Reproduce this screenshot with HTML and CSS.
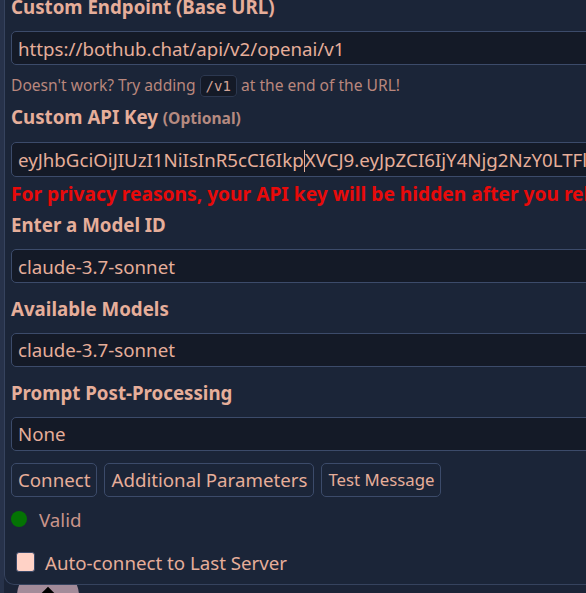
FILE: index.html
```html
<!DOCTYPE html>
<html lang="en">
<head>
  <meta charset="UTF-8">
  <meta name="viewport" content="width=device-width, initial-scale=1.0">
  <title>API Connections</title>
  <link rel="stylesheet" href="styles.css">
</head>
<body>
  <div class="panel">
    <h4 class="field-title first">Custom Endpoint (Base URL)</h4>
    <input class="text-input" type="text" value="https://bothub.chat/api/v2/openai/v1">
    <div class="hint">Doesn't work? Try adding <code>/v1</code> at the end of the URL!</div>

    <h4 class="field-title after-hint">Custom API Key <span class="optional">(Optional)</span></h4>
    <div class="text-input key-input">eyJhbGciOiJIUzI1NiIsInR5cCI6Ikp<span class="caret"></span>XVCJ9.eyJpZCI6IjY4Njg2NzY0LTFlNWYtNGI</div>
    <div class="warning">For privacy reasons, your API key will be hidden after you reload the page.</div>

    <h4 class="field-title after-warning">Enter a Model ID</h4>
    <input class="text-input" type="text" value="claude-3.7-sonnet">

    <h4 class="field-title">Available Models</h4>
    <div class="text-input">claude-3.7-sonnet</div>

    <h4 class="field-title">Prompt Post-Processing</h4>
    <div class="text-input">None</div>

    <div class="button-row">
      <div class="menu-button">Connect</div>
      <div class="menu-button">Additional Parameters</div>
      <div class="menu-button small">Test Message</div>
    </div>

    <div class="status">
      <span class="status-dot"></span>
      <span>Valid</span>
    </div>

    <label class="checkbox-row">
      <span class="checkbox"></span>
      <span>Auto-connect to Last Server</span>
    </label>
  </div>
  <div class="avatar"><span class="avatar-inner"></span></div>
</body>
</html>
```
FILE: styles.css
```css
body {
  margin: 0;
  padding: 0 0 0 4px;
  background-color: #1b2437;
  font-family: "Noto Sans", sans-serif;
  font-size: 18.7px;
  color: #e6ae9a;
  overflow: hidden;
  height: 593px;
  box-shadow: inset 4px 0 0 #27324a;
}

.panel {
  display: flow-root;
  background-color: #1b2538;
  border-left: 1px solid #36435e;
  border-bottom: 1px solid #36435e;
  border-bottom-left-radius: 10px;
  padding: 0 0 0 6px;
  height: 585px;
  box-sizing: border-box;
  position: relative;
  z-index: 1;
}

.field-title {
  font-size: 18.7px;
  font-weight: bold;
  margin: 13px 0 12px 0;
  line-height: 25px;
  white-space: nowrap;
}

.field-title.first {
  margin-top: -6px;
  margin-bottom: 12px;
}

.field-title.after-hint {
  margin-top: 7px;
  margin-bottom: 11px;
}

.field-title.after-warning {
  margin-top: 6px;
  margin-bottom: 12px;
}

.optional {
  font-size: 15.6px;
  color: #b58a80;
}

.text-input {
  display: block;
  width: 620px;
  height: 34px;
  box-sizing: border-box;
  background-color: #141a27;
  border: 1px solid #3c4b6a;
  border-radius: 5px;
  color: #e6ae9a;
  font-family: "Noto Sans", sans-serif;
  font-size: 18.7px;
  padding: 0 6px;
  line-height: 32px;
  white-space: nowrap;
  overflow: hidden;
  outline: none;
}

.key-input {
  height: 35px;
  line-height: 33px;
}

.caret {
  display: inline-block;
  width: 1px;
  height: 22px;
  background-color: #e6ae9a;
  vertical-align: -5px;
}

.hint {
  font-size: 15.6px;
  line-height: 22px;
  color: #b9877d;
  margin: 9px 0 0 0;
  white-space: nowrap;
}

.hint code {
  font-family: "DejaVu Sans Mono", monospace;
  font-size: 14px;
  background-color: #141a27;
  border: 1px solid #2c3850;
  border-radius: 4px;
  padding: 2px 5px;
  color: #d4a497;
}

.warning {
  color: #e80a0a;
  font-weight: bold;
  font-size: 19.2px;
  line-height: 25px;
  margin-top: 4px;
  white-space: nowrap;
}

.button-row {
  display: flex;
  gap: 7px;
  margin-top: 12px;
}

.menu-button {
  border: 1px solid #3c4b6a;
  border-radius: 5px;
  font-size: 18.7px;
  height: 34px;
  line-height: 32px;
  box-sizing: border-box;
  padding: 0 6px;
  white-space: nowrap;
}

.menu-button.small {
  font-size: 16.8px;
}

.status {
  display: flex;
  align-items: center;
  gap: 12px;
  height: 26px;
  margin-top: 9px;
  color: #c9948a;
}

.status-dot {
  width: 16px;
  height: 16px;
  border-radius: 50%;
  background-color: #047304;
}

.checkbox-row {
  display: flex;
  align-items: center;
  gap: 10px;
  height: 26px;
  margin: 17px 0 0 5px;
}

.checkbox {
  width: 17px;
  height: 18px;
  border-radius: 3px;
  background-color: #ffd2c6;
  border: 1px solid #3c4b6a;
}

.avatar {
  width: 62px;
  height: 62px;
  border-radius: 50%;
  background-color: #a38b99;
  margin: -20px 0 0 13px;
  overflow: hidden;
}

.avatar-inner {
  display: block;
  width: 40px;
  height: 40px;
  margin: 30px auto 0;
  background-color: #000;
  transform: rotate(45deg);
}
```
